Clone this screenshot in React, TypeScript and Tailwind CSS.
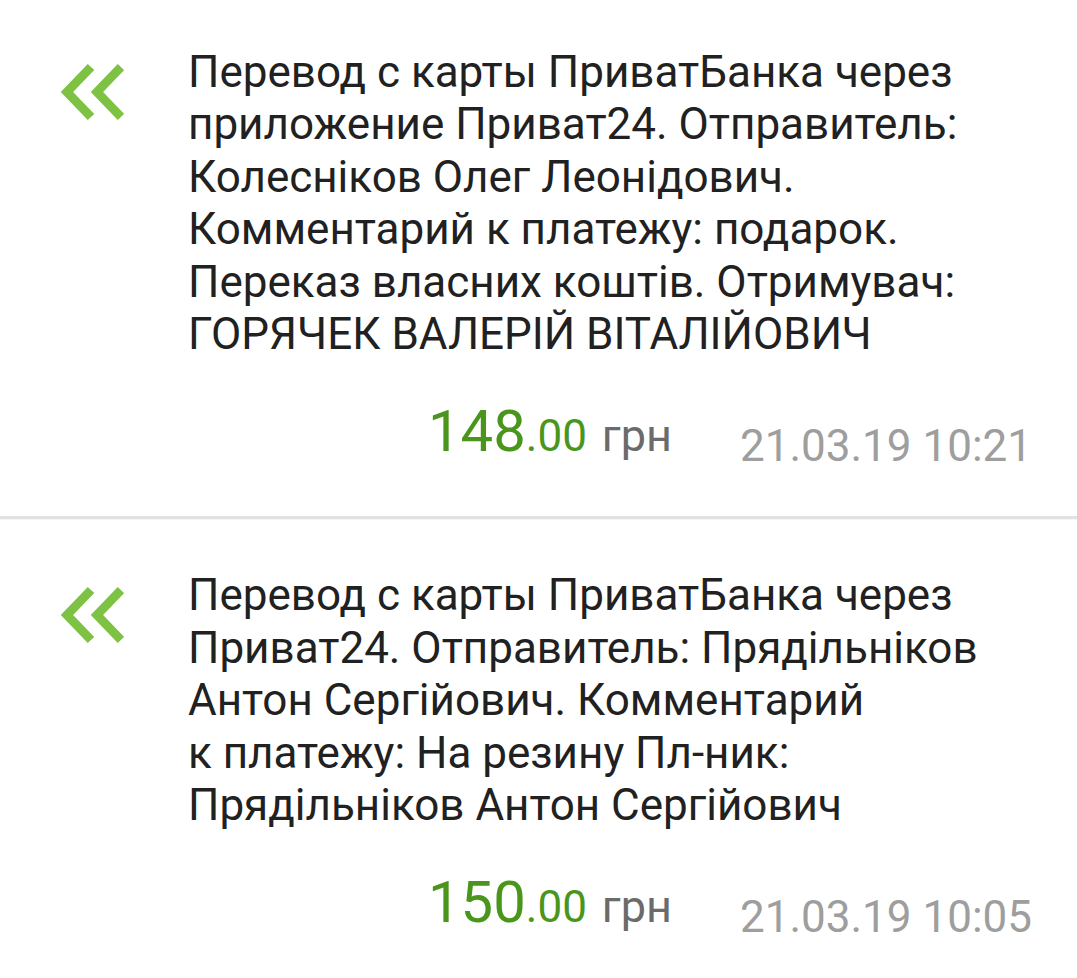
const items = [
  {
    text: "Перевод с карты ПриватБанка через приложение Приват24. Отправитель: Колесніков Олег Леонідович. Комментарий к\u00A0платежу: подарок. Переказ власних коштів. Отримувач: ГОРЯЧЕК ВАЛЕРІЙ ВІТАЛІЙОВИЧ",
    amount: "148",
    date: "21.03.19 10:21",
  },
  {
    text: "Перевод с карты ПриватБанка через Приват24. Отправитель: Прядільніков Антон Сергійович. Комментарий к\u00A0платежу: На резину Пл-ник: Прядільніков Антон Сергійович",
    amount: "150",
    date: "21.03.19 10:05",
  },
];

function Chevrons() {
  return (
    <svg className="w-[64px] h-[60px]" viewBox="0 0 64 60" fill="none" stroke="#7dc242" strokeWidth="9">
      <path d="M31 4 L7 29 L31 54" />
      <path d="M61 4 L37 29 L61 54" />
    </svg>
  );
}

export default function App() {
  return (
    <div className="w-[1077px] h-[978px] bg-white overflow-hidden font-['Roboto',sans-serif]">
      {items.map((item, i) => (
        <div key={i}>
          {i > 0 && <div className="h-[3px] bg-[#e2e2e2] shadow-[0_1px_1px_rgba(0,0,0,0.04)]" />}
          <div className={i === 0 ? "pt-[46px] pb-[56px]" : "pt-[50px] pb-[40px]"}>
            <div className="flex pl-[60px]">
              <div className="pt-[17px]">
                <Chevrons />
              </div>
              <p className="ml-[64px] w-[820px] text-[44px] leading-[52.4px] text-[#212121]">
                {item.text}
              </p>
            </div>
            <div className="flex items-baseline pl-[428px] mt-[42px]">
              <div className="flex items-baseline w-[312px]">
                <span className="text-[58px] leading-none text-[#4a961c]">{item.amount}</span>
                <span className="text-[44px] leading-none text-[#4a961c]">.00</span>
                <span className="ml-[15px] text-[45px] leading-none text-[#6b6b6b]">грн</span>
              </div>
              <span className="relative top-[10px] text-[44px] leading-none text-[#9e9e9e]">{item.date}</span>
            </div>
          </div>
        </div>
      ))}
    </div>
  );
}
